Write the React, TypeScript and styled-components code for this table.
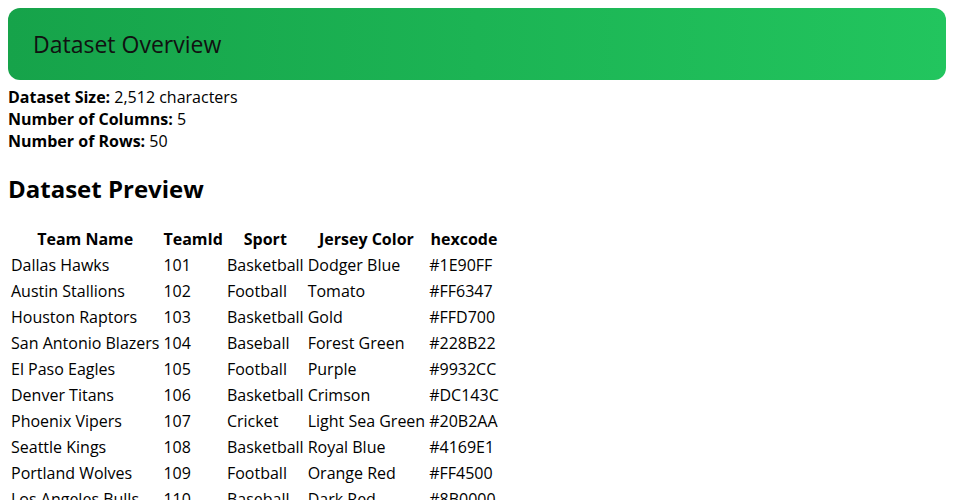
import React from 'react';
import styled, { createGlobalStyle } from 'styled-components';

const GlobalStyle = createGlobalStyle`
    body {
        margin: 8px;
        font-family: "Open Sans", "Liberation Sans", sans-serif;
        font-size: 16px;
        color: #000;
        background: #fff;
    }
`;

const Banner = styled.header`
    display: flex;
    align-items: center;
    height: 72px;
    box-sizing: border-box;
    padding: 0 25px;
    margin-right: 6px;
    margin-bottom: 6px;
    border-radius: 12px;
    background: linear-gradient(to right, #16a34a, #22c55e);
`;

const BannerTitle = styled.h1`
    margin: 0;
    font-size: 23px;
    font-weight: 400;
    color: #111;
`;

const Stats = styled.div`
    display: flex;
    flex-direction: column;
`;

const StatLine = styled.div`
    line-height: normal;
`;

const SectionTitle = styled.h2`
    font-size: 24px;
    font-weight: 700;
    margin: 20px 0;
`;

const PreviewTable = styled.table`
    border-spacing: 2px;
`;

const HeadCell = styled.th`
    padding: 1px;
    font-weight: 700;
    text-align: center;
`;

const Cell = styled.td`
    padding: 1px;
`;

interface TeamRow {
    name: string;
    id: number;
    sport: string;
    color: string;
    hex: string;
}

const rows: TeamRow[] = [
    { name: 'Dallas Hawks', id: 101, sport: 'Basketball', color: 'Dodger Blue', hex: '#1E90FF' },
    { name: 'Austin Stallions', id: 102, sport: 'Football', color: 'Tomato', hex: '#FF6347' },
    { name: 'Houston Raptors', id: 103, sport: 'Basketball', color: 'Gold', hex: '#FFD700' },
    { name: 'San Antonio Blazers', id: 104, sport: 'Baseball', color: 'Forest Green', hex: '#228B22' },
    { name: 'El Paso Eagles', id: 105, sport: 'Football', color: 'Purple', hex: '#9932CC' },
    { name: 'Denver Titans', id: 106, sport: 'Basketball', color: 'Crimson', hex: '#DC143C' },
    { name: 'Phoenix Vipers', id: 107, sport: 'Cricket', color: 'Light Sea Green', hex: '#20B2AA' },
    { name: 'Seattle Kings', id: 108, sport: 'Basketball', color: 'Royal Blue', hex: '#4169E1' },
    { name: 'Portland Wolves', id: 109, sport: 'Football', color: 'Orange Red', hex: '#FF4500' },
    { name: 'Los Angeles Bulls', id: 110, sport: 'Baseball', color: 'Dark Red', hex: '#8B0000' },
    { name: 'San Diego Sharks', id: 111, sport: 'Football', color: 'Teal', hex: '#008080' },
    { name: 'Chicago Falcons', id: 112, sport: 'Basketball', color: 'Navy', hex: '#000080' },
];

const columns = ['Team Name', 'TeamId', 'Sport', 'Jersey Color', 'hexcode'];

const App = () => {
    return (
        <>
            <GlobalStyle />
            <Banner>
                <BannerTitle>Dataset Overview</BannerTitle>
            </Banner>
            <Stats>
                <StatLine><b>Dataset Size:</b> 2,512 characters</StatLine>
                <StatLine><b>Number of Columns:</b> 5</StatLine>
                <StatLine><b>Number of Rows:</b> 50</StatLine>
            </Stats>
            <SectionTitle>Dataset Preview</SectionTitle>
            <PreviewTable>
                <thead>
                    <tr>
                        {columns.map((c) => (
                            <HeadCell key={c}>{c}</HeadCell>
                        ))}
                    </tr>
                </thead>
                <tbody>
                    {rows.map((r) => (
                        <tr key={r.id}>
                            <Cell>{r.name}</Cell>
                            <Cell>{r.id}</Cell>
                            <Cell>{r.sport}</Cell>
                            <Cell>{r.color}</Cell>
                            <Cell>{r.hex}</Cell>
                        </tr>
                    ))}
                </tbody>
            </PreviewTable>
        </>
    );
};

export default App;
